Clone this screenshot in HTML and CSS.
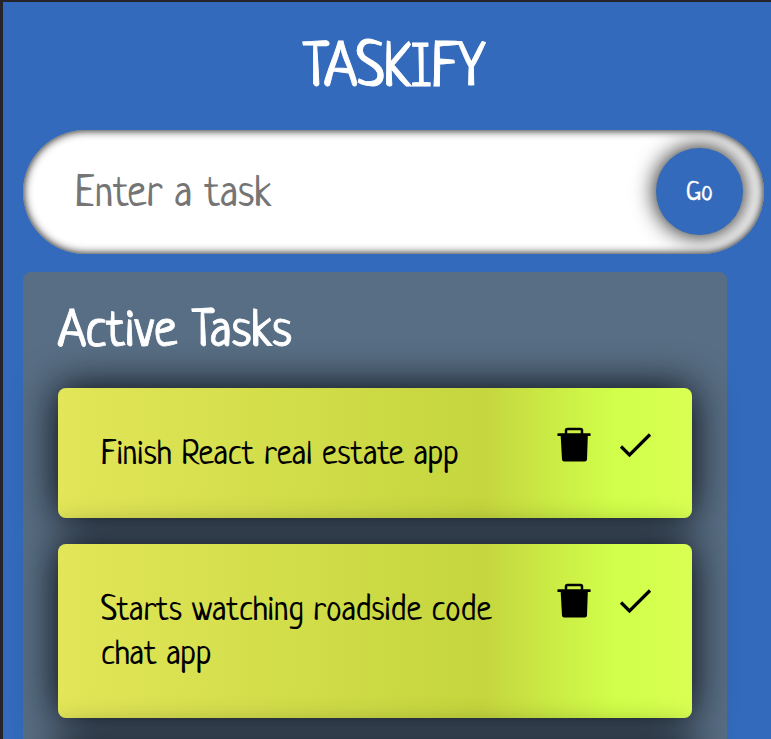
FILE: index.html
```html
<!DOCTYPE html>
<html lang="en">
<head>
<meta charset="utf-8">
<title>Taskify</title>
<link rel="stylesheet" href="styles.css">
</head>
<body>
<main class="app">
  <h1 class="heading">TASKIFY</h1>
  <form class="entry">
    <input class="entry-box" type="text" placeholder="Enter a task">
    <button class="entry-submit" type="button">Go</button>
  </form>
  <section class="tasks">
    <h2 class="tasks-heading">Active Tasks</h2>
    <article class="task">
      <p class="task-text">Finish React real estate app</p>
      <div class="icons">
        <svg class="icon" viewBox="0 0 36 36"><path d="M10 7V3.500Q10 2 11.500 2H24.500Q26 2 26 3.500V7" fill="none" stroke="#000" stroke-width="2.500"/><path d="M2 6.300H34Q34.700 6.300 34.700 7.700T34 9H31.800L31 32.500Q30.900 34.600 28.800 34.600H8.200Q6.100 34.600 6 32.500L4.700 9H2Q1.300 9 1.300 7.700T2 6.300Z"/></svg>
        <svg class="icon check" viewBox="0 0 36 36"><path d="M3 19.500L11.500 28L32 7.500" fill="none" stroke="#000" stroke-width="3.200"/></svg>
      </div>
    </article>
    <article class="task">
      <p class="task-text">Starts watching roadside code<br>chat app</p>
      <div class="icons">
        <svg class="icon" viewBox="0 0 36 36"><path d="M10 7V3.500Q10 2 11.500 2H24.500Q26 2 26 3.500V7" fill="none" stroke="#000" stroke-width="2.500"/><path d="M2 6.300H34Q34.700 6.300 34.700 7.700T34 9H31.800L31 32.500Q30.900 34.600 28.800 34.600H8.200Q6.100 34.600 6 32.500L4.700 9H2Q1.300 9 1.300 7.700T2 6.300Z"/></svg>
        <svg class="icon check" viewBox="0 0 36 36"><path d="M3 19.500L11.500 28L32 7.500" fill="none" stroke="#000" stroke-width="3.200"/></svg>
      </div>
    </article>
    <article class="task"></article>
  </section>
</main>
</body>
</html>
```
FILE: styles.css
```css
* { box-sizing: border-box; }
html { height: 100%; font-size: 17.5px; overflow: hidden; }
body {
  height: 100%;
  margin: 0;
  overflow: hidden;
  background: #336abb;
  border-top: 2px solid #25242a;
  border-left: 3px solid #25242a;
  font-family: Neucha, "Open Sans", sans-serif;
}
.app { height: 737px; padding-left: 20px; overflow: hidden; }
.heading {
  margin: 0;
  width: 741px;
  height: 128px;
  line-height: 136px;
  font-size: 3.500rem;
  font-weight: 400;
  -webkit-text-stroke: .9px #fff;
  text-align: center;
  color: #fff;
}
.entry {
  display: flex;
  align-items: center;
  justify-content: space-between;
  width: 741px;
  height: 124px;
  padding: 0 21px 1px 52px;
  border-radius: 62px;
  background: #fff;
  box-shadow: inset 0 0 10px #000;
  overflow: hidden;
}
.entry-box {
  width: 500px;
  height: 80px;
  padding: 6px 0 0;
  border: 0;
  outline: 0;
  background: transparent;
  font: 2.500rem Neucha, "Open Sans", sans-serif;
}
.entry-box::placeholder { color: #757575; opacity: 1; }
.entry-submit {
  width: 87.500px;
  height: 87.500px;
  padding: 4px 0 0;
  border: 0;
  border-radius: 50%;
  background: #336abb;
  color: #fff;
  font: 1.500rem Neucha, "Open Sans", sans-serif;
  -webkit-text-stroke: .3px #fff;
  box-shadow: 0 0 23px #000;
}
.tasks {
  display: flex;
  flex-direction: column;
  gap: 26.250px;
  width: 704px;
  height: 600px;
  margin-top: 18px;
  padding: 0 35px;
  border-radius: 8px;
  background: #586e84;
}
.tasks-heading {
  margin: 0 0 -26.250px;
  height: 116px;
  flex: none;
  line-height: 123px;
  font-size: 3rem;
  font-weight: 400;
  -webkit-text-stroke: .8px #fff;
  color: #fff;
}
.task {
  display: flex;
  flex: none;
  justify-content: space-between;
  width: 634px;
  min-height: 130px;
  padding: 43px 38px 43px 43px;
  border-radius: 8px;
  background: linear-gradient(90deg, #e2e658 0%, #c5d63e 67%, #d1ff4a 88%, #d9ff52 100%);
  box-shadow: 0 0 40px rgba(0, 0, 6, .98);
}
.task-text {
  margin: 3px 0 -3px;
  width: 410px;
  font-size: 2rem;
  line-height: 43.750px;
  color: #000;
}
.icons { display: flex; gap: 26px; margin-top: -4.500px; }
.icon { display: block; width: 36px; height: 36px; }
```
